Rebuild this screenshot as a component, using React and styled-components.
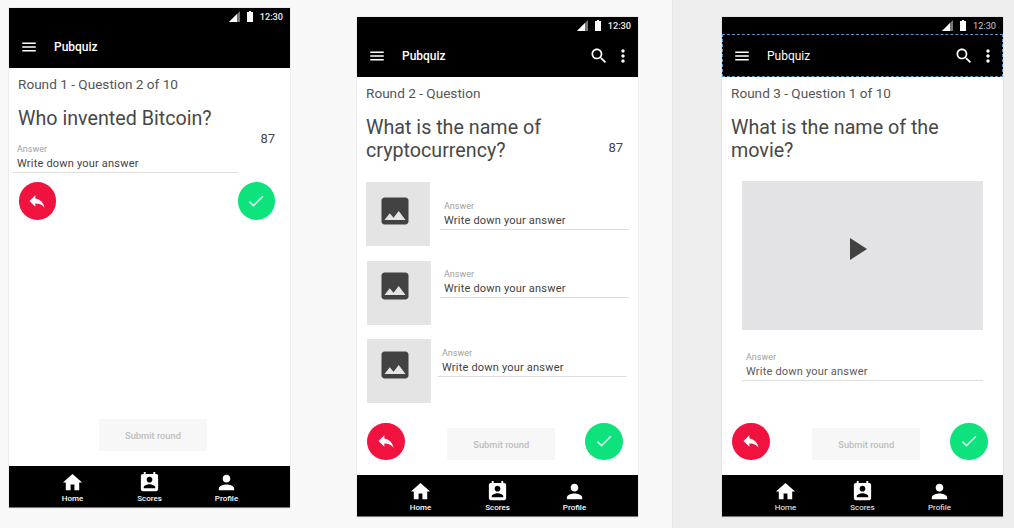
import React from 'react';
import styled, { createGlobalStyle } from 'styled-components';

const GlobalStyle = createGlobalStyle`
  html, body {
    margin: 0;
    padding: 0;
    background: #eeeeee;
    font-family: Roboto, "Liberation Sans", sans-serif;
  }
`;

const Icon = ({ d, size = 24, color = '#fff' }) => (
    <svg width={size} height={size} viewBox="0 0 24 24" fill={color} style={{ display: 'block' }}>
        <path d={d} />
    </svg>
);

const paths = {
    menu: 'M3 18h18v-2H3v2zm0-5h18v-2H3v2zm0-7v2h18V6H3z',
    search: 'M15.5 14h-.79l-.28-.27C15.41 12.59 16 11.11 16 9.5 16 5.91 13.09 3 9.5 3S3 5.91 3 9.5 5.91 16 9.5 16c1.61 0 3.09-.59 4.23-1.57l.27.28v.79l5 4.99L20.49 19l-4.99-5zm-6 0C7.01 14 5 11.99 5 9.5S7.01 5 9.5 5 14 7.01 14 9.5 11.99 14 9.5 14z',
    more: 'M12 8c1.1 0 2-.9 2-2s-.9-2-2-2-2 .9-2 2 .9 2 2 2zm0 2c-1.1 0-2 .9-2 2s.9 2 2 2 2-.9 2-2-.9-2-2-2zm0 6c-1.1 0-2 .9-2 2s.9 2 2 2 2-.9 2-2-.9-2-2-2z',
    reply: 'M10 9V5l-7 7 7 7v-4.1c5 0 8.5 1.6 11 5.1-1-5-4-10-11-11z',
    check: 'M9 16.17L4.83 12l-1.42 1.41L9 19 21 7l-1.41-1.41z',
    home: 'M10 20v-6h4v6h5v-8h3L12 3 2 12h3v8z',
    scores: 'M19 3h-1V1h-2v2H8V1H6v2H5c-1.11 0-2 .9-2 2v14c0 1.1.89 2 2 2h14c1.1 0 2-.9 2-2V5c0-1.1-.9-2-2-2zm-7 3c1.66 0 3 1.34 3 3s-1.34 3-3 3-3-1.34-3-3 1.34-3 3-3zm6 12H6v-1c0-2 4-3.1 6-3.1s6 1.1 6 3.1v1z',
    person: 'M12 12c2.21 0 4-1.79 4-4s-1.79-4-4-4-4 1.79-4 4 1.79 4 4 4zm0 2c-2.67 0-8 1.34-8 4v2h16v-2c0-2.66-5.33-4-8-4z',
    image: 'M21 19V5c0-1.1-.9-2-2-2H5c-1.1 0-2 .9-2 2v14c0 1.1.9 2 2 2h14c1.1 0 2-.9 2-2zM8.5 13.5l2.5 3.01L14.5 12l4.5 6H5l3.5-4.5z',
};

const Phone = ({ $top, $gap, light, actions, children }) => (
    <PhoneFrame $top={$top} $gap={$gap}>
        <StatusBar>
            <svg width="11" height="11" viewBox="0 0 11 11" style={{ display: 'block' }}>
                <path d="M11 0V11H0z" fill="#777" />
                <path d="M8 3V11H0z" fill="#fff" />
            </svg>
            <svg width="6" height="11" viewBox="0 0 6 11" style={{ display: 'block' }}>
                <path d="M2 0h2v1h2v10H0V1h2z" fill="#fff" />
            </svg>
            <StatusTime $light={light}>12:30</StatusTime>
        </StatusBar>
        <Toolbar $outlined={light}>
            <Icon d={paths.menu} size={18} />
            <AppTitle $light={light}>Pubquiz</AppTitle>
            {actions && (
                <ToolbarActions>
                    <Icon d={paths.search} size={20} />
                    <Icon d={paths.more} size={20} />
                </ToolbarActions>
            )}
        </Toolbar>
        <Body>{children}</Body>
        <BottomNav>
            <NavItem $light={light}><Icon d={paths.home} size={23} />Home</NavItem>
            <NavItem $light={light}><Icon d={paths.scores} size={23} />Scores</NavItem>
            <NavItem $light={light}><Icon d={paths.person} size={23} />Profile</NavItem>
        </BottomNav>
    </PhoneFrame>
);

const AnswerField = ({ $width = 189, $top = 0, $shift = 0, $light }) => (
    <Field $width={$width} $top={$top} $shift={$shift}>
        <FieldLabel>Answer</FieldLabel>
        <FieldValue $light={$light}>Write down your answer</FieldValue>
    </Field>
);

const BackButton = () => (
    <RoundButton $color="#f0123f"><Icon d={paths.reply} size={20} /></RoundButton>
);

const ConfirmButton = () => (
    <RoundButton $color="#0de27c"><Icon d={paths.check} size={20} color="#d4f7e6" /></RoundButton>
);

const imageRows = [
    { shift: 0, iconTop: 11, iconRight: 6, fieldTop: 18, fieldShift: 10 },
    { shift: 1, iconTop: 7, iconRight: 8, fieldTop: 7, fieldShift: 9 },
    { shift: 1, iconTop: 8, iconRight: 8, fieldTop: 8, fieldShift: 7 },
];

const App = () => (
    <Page>
        <GlobalStyle />
        <LeftPane>
            <Phone $top={8} $gap={9}>
                <RoundLabel>Round 1 - Question 2 of 10</RoundLabel>
                <Question>Who invented Bitcoin?</Question>
                <AnswerRow>
                    <AnswerField $width={225} $top={13} $shift={-5} />
                    <Score>87</Score>
                </AnswerRow>
                <ButtonRow>
                    <BackButton />
                    <ConfirmButton />
                </ButtonRow>
                <SubmitButton $alone>Submit round</SubmitButton>
            </Phone>
            <Phone $top={17} $gap={67} actions>
                <RoundLabel>Round 2 - Question</RoundLabel>
                <QuestionRow>
                    <Question>What is the name of<br />cryptocurrency?</Question>
                    <Score $raised>87</Score>
                </QuestionRow>
                <ImageRows>
                    {imageRows.map((row, i) => (
                        <ImageRow key={i} $shift={row.shift}>
                            <ImageTile $top={row.iconTop} $right={row.iconRight}>
                                <Icon d={paths.image} size={36} color="#424242" />
                            </ImageTile>
                            <AnswerField $top={row.fieldTop} $shift={row.fieldShift} />
                        </ImageRow>
                    ))}
                </ImageRows>
                <ActionRow>
                    <BackButton />
                    <SubmitButton>Submit round</SubmitButton>
                    <ConfirmButton />
                </ActionRow>
            </Phone>
        </LeftPane>
        <RightPane>
            <Phone $top={0} $gap={0} actions light>
                <RoundLabel>Round 3 - Question 1 of 10</RoundLabel>
                <Question>What is the name of the<br />movie?</Question>
                <VideoBox>
                    <svg width="17" height="22" viewBox="0 0 17 22" style={{ display: 'block' }}>
                        <path d="M0 0L17 11 0 22z" fill="#424242" />
                    </svg>
                </VideoBox>
                <AnswerField $width={241} $top={21} $shift={11} $light />
                <ActionRow>
                    <BackButton />
                    <SubmitButton>Submit round</SubmitButton>
                    <ConfirmButton />
                </ActionRow>
            </Phone>
        </RightPane>
    </Page>
);

export default App;

const Page = styled.div`
  display: flex;
  width: 1014px;
  height: 528px;
  overflow: hidden;
`;

const LeftPane = styled.div`
  display: flex;
  align-items: flex-start;
  width: 673px;
  flex: none;
  box-sizing: border-box;
  background: #f8f8f8;
  border-right: 1px solid #e6e6e6;
`;

const RightPane = styled.div`
  flex: 1;
  display: flex;
  align-items: flex-start;
  padding: 17px 0 0 49px;
  background: #eeeeee;
`;

const PhoneFrame = styled.div`
  display: flex;
  flex-direction: column;
  flex: none;
  width: 281px;
  height: 500px;
  margin-top: ${p => p.$top}px;
  margin-left: ${p => p.$gap}px;
  background: #fff;
  box-shadow: 0 0 1px rgba(0, 0, 0, 0.25);
`;

const StatusBar = styled.div`
  display: flex;
  align-items: center;
  justify-content: flex-end;
  gap: 7px;
  height: 17px;
  flex: none;
  padding-right: 7px;
  background: #000;
`;

const StatusTime = styled.span`
  font-size: 9.2px;
  font-weight: ${p => (p.$light ? 400 : 500)};
  color: ${p => (p.$light ? '#ccc' : '#eee')};
`;

const Toolbar = styled.div`
  display: flex;
  align-items: center;
  gap: 16px;
  height: 43px;
  flex: none;
  box-sizing: border-box;
  padding: 0 5px 0 11px;
  background: #000;
  outline: ${p => (p.$outlined ? '1px dashed #5b93c4' : 'none')};
  outline-offset: -1px;
`;

const AppTitle = styled.span`
  font-size: 12px;
  font-weight: ${p => (p.$light ? 400 : 500)};
  color: #fff;
`;

const ToolbarActions = styled.div`
  display: flex;
  gap: 4px;
  margin-left: auto;
`;

const Body = styled.div`
  flex: 1;
  display: flex;
  flex-direction: column;
  min-height: 0;
  padding: 6px 15px 15px 9px;
`;

const RoundLabel = styled.div`
  font-size: 13.6px;
  line-height: 20px;
  color: #555;
  margin-bottom: 13px;
`;

const Question = styled.div`
  font-size: 19.7px;
  line-height: 23px;
  font-weight: 400;
  color: #484848;
  white-space: nowrap;
`;

const QuestionRow = styled.div`
  display: flex;
  align-items: flex-start;
  justify-content: space-between;
`;

const AnswerRow = styled.div`
  display: flex;
  align-items: flex-start;
  justify-content: space-between;
`;

const Score = styled.div`
  font-size: 13px;
  line-height: 18px;
  color: #484848;
  margin-top: ${p => (p.$raised ? 23 : 0)}px;
`;

const Field = styled.div`
  flex: none;
  box-sizing: border-box;
  width: ${p => p.$width}px;
  margin-top: ${p => p.$top}px;
  margin-left: ${p => p.$shift}px;
  padding: 0 0 1px 4px;
  border-bottom: 1px solid #ddd;
`;

const FieldLabel = styled.div`
  font-size: 9px;
  line-height: 12px;
  margin-bottom: 2px;
  color: #a0a0a0;
`;

const FieldValue = styled.div`
  font-size: 11px;
  line-height: 14px;
  letter-spacing: 0.2px;
  color: ${p => (p.$light ? '#5a5a5a' : '#424242')};
`;

const ButtonRow = styled.div`
  display: flex;
  justify-content: space-between;
  margin-top: 9px;
  padding-left: 0.5px;
`;

const ActionRow = styled.div`
  display: flex;
  align-items: flex-end;
  justify-content: space-between;
  margin-top: auto;
  padding: 0 0.5px 0 1px;
`;

const RoundButton = styled.div`
  display: flex;
  align-items: center;
  justify-content: center;
  width: 37.5px;
  height: 37.5px;
  flex: none;
  border-radius: 50%;
  background: ${p => p.$color};
`;

const SubmitButton = styled.div`
  display: flex;
  align-items: center;
  justify-content: center;
  width: 108px;
  height: 32px;
  flex: none;
  margin-top: ${p => (p.$alone ? 'auto' : 0)};
  margin-left: ${p => (p.$alone ? 81 : 13)}px;
  background: #f7f7f7;
  font-size: 9.3px;
  font-weight: 500;
  color: #bdbdbd;
`;

const ImageRows = styled.div`
  display: flex;
  flex-direction: column;
  gap: 14.5px;
  margin-top: 20px;
`;

const ImageRow = styled.div`
  display: flex;
  align-items: flex-start;
  margin-left: ${p => p.$shift}px;
`;

const ImageTile = styled.div`
  display: flex;
  align-items: flex-start;
  justify-content: center;
  width: 64px;
  height: 64px;
  flex: none;
  padding: ${p => p.$top}px ${p => p.$right}px 0 0;
  box-sizing: border-box;
  background: #e4e4e4;
`;

const VideoBox = styled.div`
  display: flex;
  align-items: center;
  justify-content: center;
  width: 241px;
  height: 149px;
  flex: none;
  box-sizing: border-box;
  margin: 19px 0 0 11px;
  padding: 0 8px 13px 0;
  background: #e3e3e5;
`;

const BottomNav = styled.div`
  display: grid;
  grid-template-columns: repeat(3, 77px);
  justify-content: center;
  height: 42px;
  flex: none;
  box-sizing: border-box;
  padding-top: 5px;
  background: #000;
  border-bottom: 1px solid #777;
`;

const NavItem = styled.div`
  display: flex;
  flex-direction: column;
  align-items: center;
  font-size: 8px;
  line-height: 10px;
  font-weight: ${p => (p.$light ? 400 : 500)};
  color: #fff;
`;
